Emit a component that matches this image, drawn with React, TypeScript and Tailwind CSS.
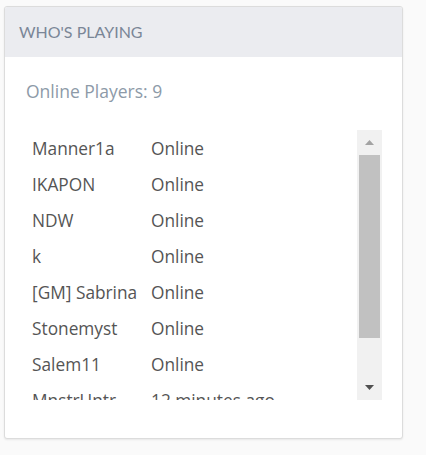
const players: [string, string][] = [
  ["Manner1a", "Online"],
  ["IKAPON", "Online"],
  ["NDW", "Online"],
  ["k", "Online"],
  ["[GM] Sabrina", "Online"],
  ["Stonemyst", "Online"],
  ["Salem11", "Online"],
  ["MnstrUntr", "12 minutes ago"],
];

export default function App() {
  return (
    <div className="min-h-screen bg-[#fafafa] pt-[6px] pl-[4px]">
      <div className="w-[399px] h-[433px] bg-white border border-[#dcdcdc] rounded-[3px] shadow-[0_1px_2px_rgba(0,0,0,0.08)] overflow-hidden">
        {/* Header */}
        <div className="h-[50px] bg-[#ebecf0] flex items-center px-[14px]">
          <h2 className="text-[16px] text-[#7a8697] font-['Lato',sans-serif]">
            WHO'S PLAYING
          </h2>
        </div>

        {/* Body */}
        <div className="px-[21px] pt-[22px] font-['Open_Sans',sans-serif]">
          <p className="text-[17.5px] leading-[24px] text-[#8d9aa8]">Online Players: 9</p>

          <div className="mt-[27px] flex h-[270px] w-[356px]">
            <div className="flex-1 overflow-hidden pl-[6px] pt-[1px]">
              {players.map(([name, status]) => (
                <div key={name} className="flex items-center h-[36px] text-[17.3px] text-[#555]">
                  <span className="w-[119px]">{name}</span>
                  <span>{status}</span>
                </div>
              ))}
            </div>

            {/* Scrollbar */}
            <div className="w-[25px] bg-[#f1f1f1] flex flex-col items-center">
              <div className="h-[25px] flex items-center justify-center">
                <svg width="9" height="5" viewBox="0 0 9 5">
                  <polygon points="4.5,0 9,5 0,5" fill="#a3a3a3" />
                </svg>
              </div>
              <div className="w-[21px] h-[183px] bg-[#c1c1c1]" />
              <div className="flex-1 flex items-end justify-center pb-[10px]">
                <svg width="9" height="5" viewBox="0 0 9 5">
                  <polygon points="0,0 9,0 4.5,5" fill="#505050" />
                </svg>
              </div>
            </div>
          </div>
        </div>
      </div>
    </div>
  );
}
